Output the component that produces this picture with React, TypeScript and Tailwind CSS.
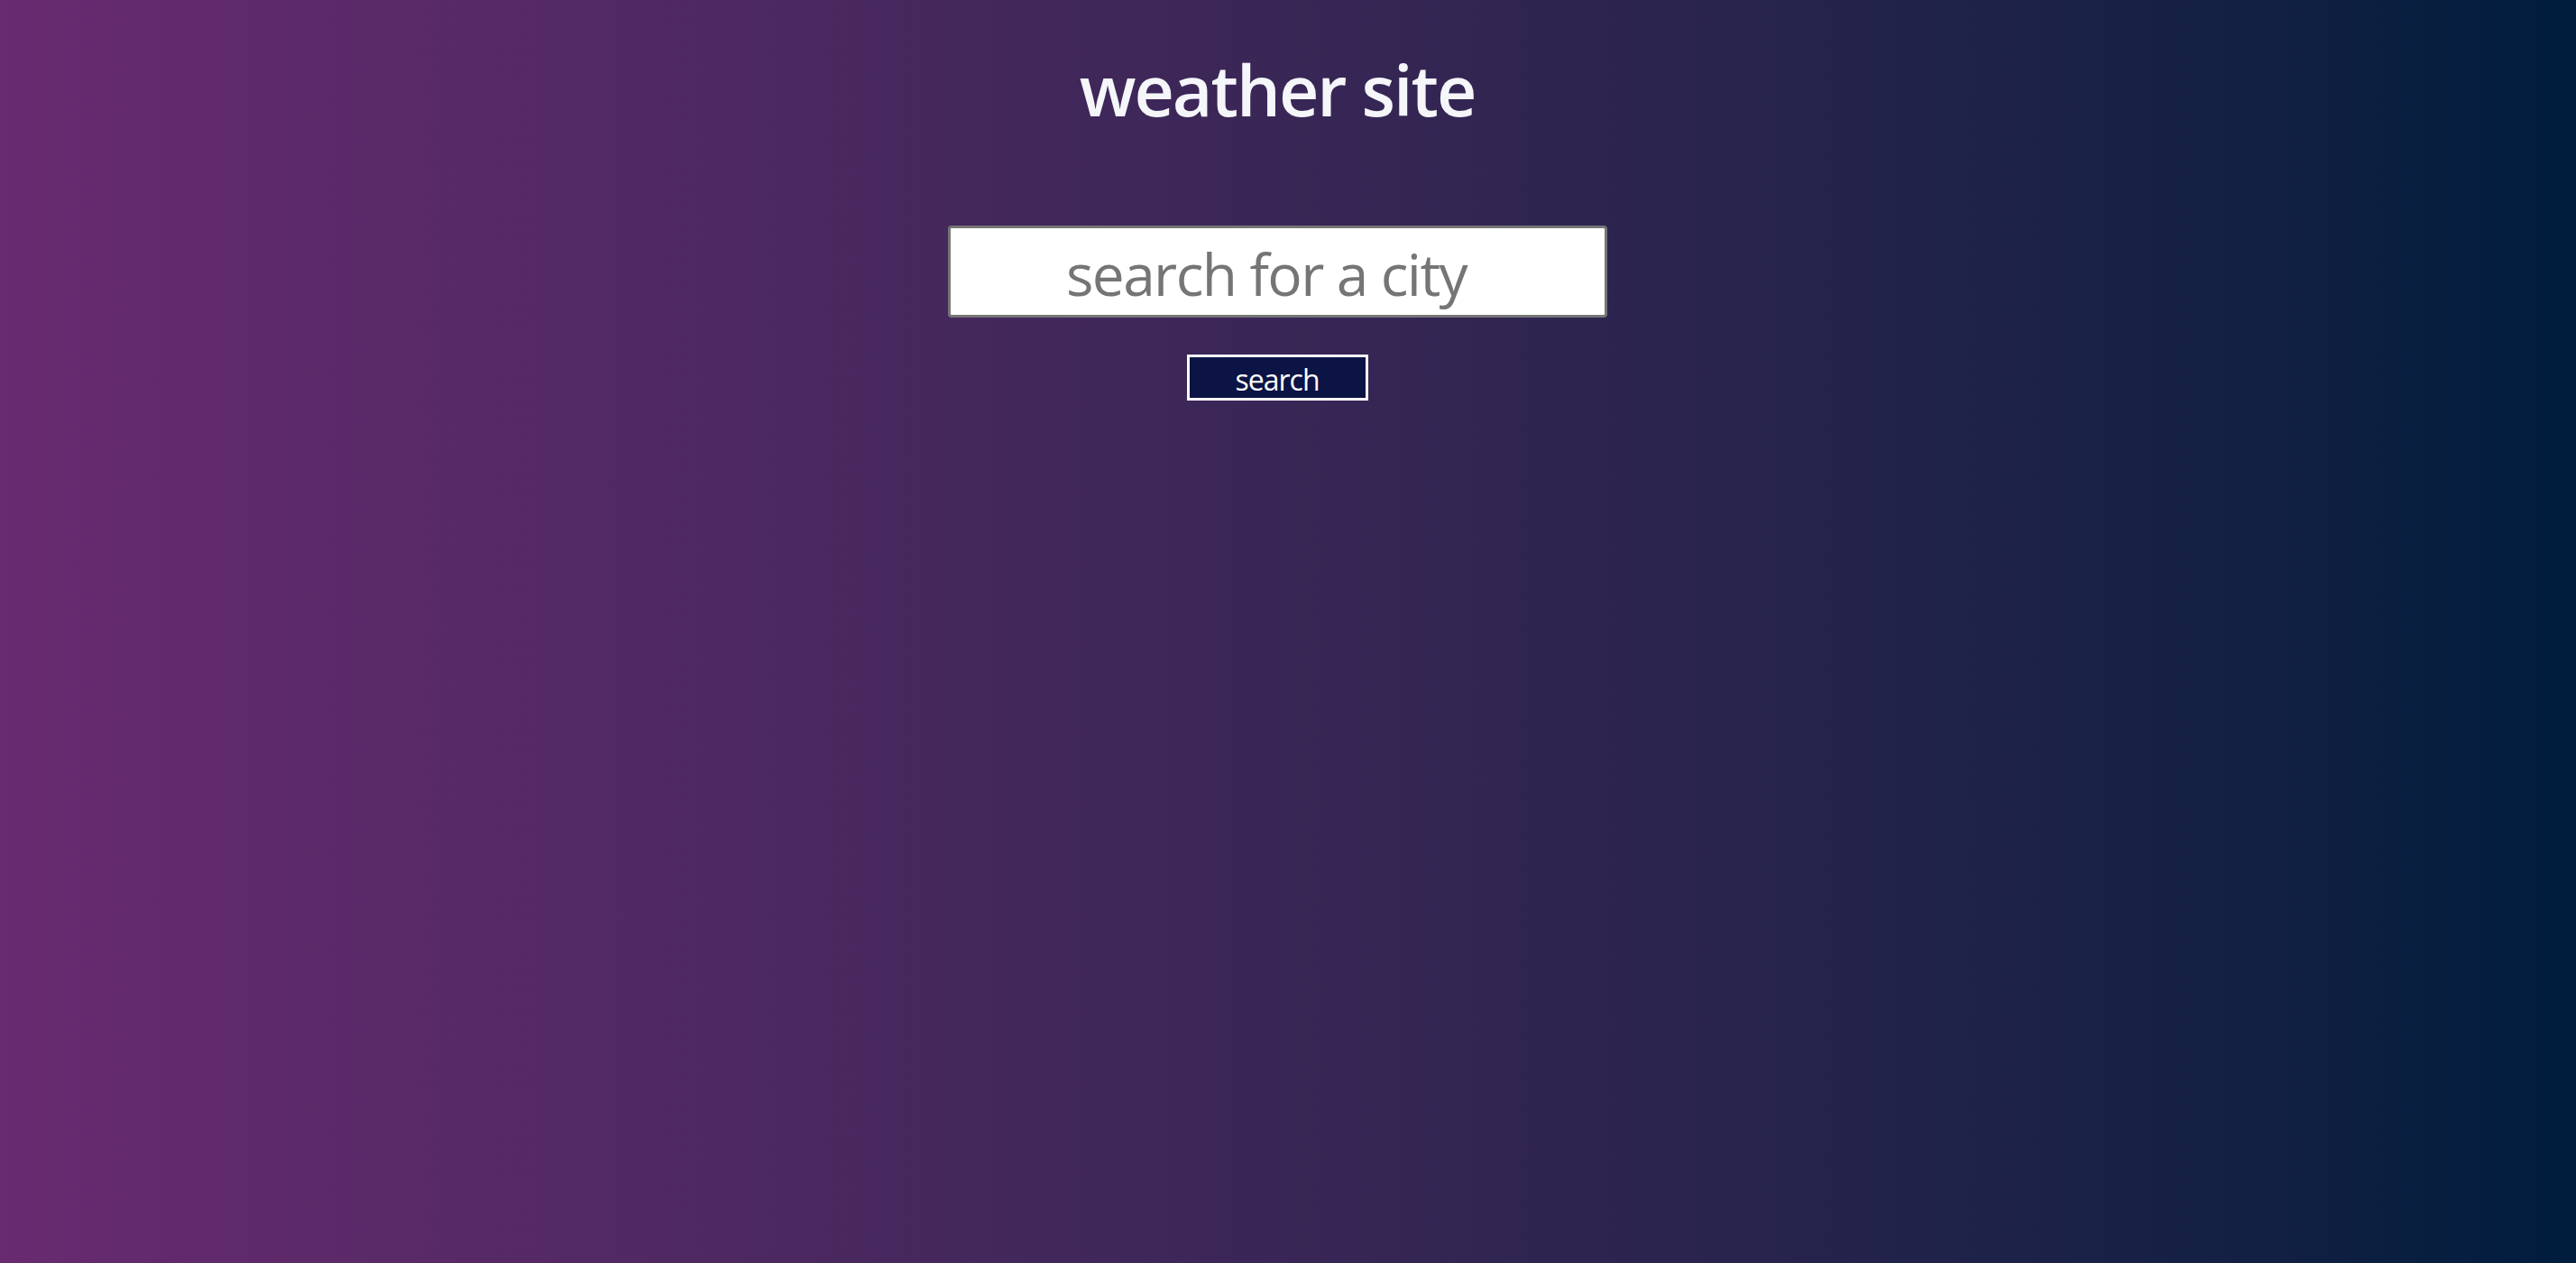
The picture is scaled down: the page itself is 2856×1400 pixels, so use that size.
import React from "react";

export default function App() {
  return (
    <div
      className="w-full h-[1400px] bg-gradient-to-r from-[#682a70] to-[#001d3d] flex flex-col items-center pr-[24px]"
      style={{ fontFamily: '"Open Sans", "Noto Sans", sans-serif' }}
    >
      <h1 className="mt-[60px] text-[77px] leading-[80px] font-semibold text-[#f5f6fa] tracking-[-2px]">
        weather site
      </h1>
      <input
        type="text"
        placeholder="search for a city"
        className="mt-[110px] w-[731px] h-[102px] bg-white border-[3px] border-[#767676] rounded-[4px] text-center text-[64px] tracking-[-1.6px] text-black placeholder:text-[#757575] outline-none pt-[4px] pr-[24px]"
        style={{ fontFamily: '"Open Sans", "Noto Sans", sans-serif' }}
      />
      <button className="mt-[41px] w-[201px] h-[51px] bg-[#0b1444] border-[3px] border-white text-white text-[32px] leading-none tracking-[-1px] flex items-center justify-center pt-[4px]">
        search
      </button>
    </div>
  );
}
